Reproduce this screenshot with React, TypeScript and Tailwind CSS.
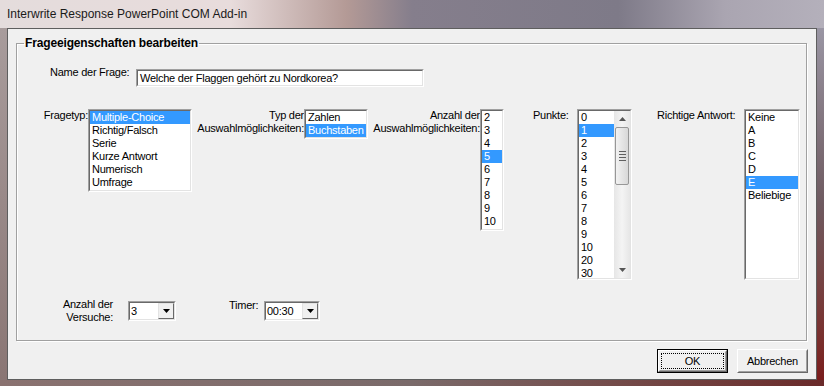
import type { ReactNode } from "react";

const font = { fontFamily: '"Liberation Sans", Arial, sans-serif' };

// sunken 3D frame (classic listbox / edit)
function Sunken({ className = "", children }: { className?: string; children: ReactNode }) {
  return (
    <div className={`border border-t-[#a0a0a0] border-l-[#a0a0a0] border-r-white border-b-white ${className}`}>
      <div className="h-full w-full border border-t-[#696969] border-l-[#696969] border-r-[#e3e3e3] border-b-[#e3e3e3] bg-white">
        {children}
      </div>
    </div>
  );
}

function ListBox({
  items,
  selected,
  className,
  scroll = false,
}: {
  items: string[];
  selected: string;
  className: string;
  scroll?: boolean;
}) {
  return (
    <Sunken className={className}>
      <div className="flex h-full">
        <div className="flex-1 min-w-0">
          {items.map((it) => (
            <div
              key={it}
              className={`h-[13px] pl-[2px] leading-[13px] whitespace-nowrap ${
                it === selected ? "bg-[#3399ff] text-white" : "text-black"
              }`}
            >
              {it}
            </div>
          ))}
        </div>
        {scroll && <ScrollBar />}
      </div>
    </Sunken>
  );
}

function ScrollBar() {
  return (
    <div className="w-[16px] h-full flex flex-col items-center bg-gradient-to-r from-[#e6e6e6] via-[#f4f4f4] to-[#e6e6e6]">
      <div className="h-[16px] w-full flex items-center justify-center">
        <svg width="7" height="4" viewBox="0 0 7 4">
          <path d="M3.5 0 L7 4 L0 4 Z" fill="#555" />
        </svg>
      </div>
      <div className="w-[14px] h-[58px] rounded-[2px] border border-[#979797] bg-gradient-to-r from-[#f2f2f2] to-[#d8d8d8] flex flex-col items-center justify-center gap-[2px]">
        <div className="w-[7px] h-px bg-[#606060]" />
        <div className="w-[7px] h-px bg-[#606060]" />
        <div className="w-[7px] h-px bg-[#606060]" />
        <div className="w-[7px] h-px bg-[#606060]" />
      </div>
      <div className="flex-1" />
      <div className="h-[16px] w-full flex items-center justify-center">
        <svg width="7" height="4" viewBox="0 0 7 4">
          <path d="M0 0 L7 0 L3.5 4 Z" fill="#555" />
        </svg>
      </div>
    </div>
  );
}

function Combo({ value, className }: { value: string; className: string }) {
  return (
    <Sunken className={className}>
      <div className="flex h-full items-center">
        <div className="flex-1 pl-[1px] leading-[13px]">{value}</div>
        <div className="h-[16px] w-[16px] border border-t-[#e3e3e3] border-l-[#e3e3e3] border-r-[#696969] border-b-[#696969] bg-[#f0f0f0] flex items-center justify-center">
          <svg width="7" height="4" viewBox="0 0 7 4">
            <path d="M0 0 L7 0 L3.5 4 Z" fill="#000" />
          </svg>
        </div>
      </div>
    </Sunken>
  );
}

function Button({ label, isDefault = false }: { label: string; isDefault?: boolean }) {
  const inner = (
    <div className="h-full w-full border border-t-white border-l-white border-r-[#696969] border-b-[#696969] bg-[#f0f0f0]">
      <div className="h-full w-full border border-t-[#f0f0f0] border-l-[#f0f0f0] border-r-[#a0a0a0] border-b-[#a0a0a0] flex items-center justify-center p-[1px]">
        <div
          className={`h-full w-full flex items-center justify-center leading-none ${
            isDefault ? "border border-dotted border-black" : ""
          }`}
        >
          {label}
        </div>
      </div>
    </div>
  );
  return (
    <div className={`w-[71px] h-[24px] ${isDefault ? "border border-black" : ""}`}>{inner}</div>
  );
}

export default function App() {
  return (
    <div className="w-[824px] h-[386px] overflow-hidden text-[11px] tracking-[-0.25px] text-black" style={font}>
      {/* title bar */}
      <div className="h-[28px] flex items-center pl-[7px] bg-[linear-gradient(90deg,#e4dcdc_0%,#e8dcdc_28%,#b49a96_42%,#857e8c_50%,#7e7a88_75%,#aaa5b1_88%,#b4b0bb_100%)]">
        <span className="text-[12px] tracking-normal text-[#1a1a1a]">Interwrite Response PowerPoint COM Add-in</span>
      </div>
      <div className="flex h-[352px]">
        <div className="w-[7px] bg-gradient-to-b from-[#a89c9c] to-[#8a7674]" />
        <div className="w-[810px] border border-[#5e5e5e] bg-[#f0f0f0] flex flex-col">
          <fieldset className="ml-[8px] mr-[9px] mt-[7px] h-[305px] border border-[#a0a0a0] shadow-[1px_1px_0_#fff,inset_1px_1px_0_#fff] px-0 flex flex-col">
            <legend className="ml-[7px] px-[1px] text-[12px] leading-[14px] font-bold tracking-[-0.15px]">
              Frageeigenschaften bearbeiten
            </legend>

            {/* name */}
            <div className="flex items-start mt-[16px] pl-[33px]">
              <div className="w-[86px] leading-[13px]">Name der Frage:</div>
              <Sunken className="mt-[3px] w-[288px] h-[18px]">
                <div className="pl-[2px] leading-[14px] text-[11px]">Welche der Flaggen gehört zu Nordkorea?</div>
              </Sunken>
            </div>

            {/* list boxes */}
            <div className="flex items-start mt-[22px] leading-[13px]">
              <div className="w-[71px] text-right">Fragetyp:</div>
              <ListBox
                className="w-[104px] h-[83px]"
                items={["Multiple-Choice", "Richtig/Falsch", "Serie", "Kurze Antwort", "Numerisch", "Umfrage"]}
                selected="Multiple-Choice"
              />
              <div className="w-[112px] text-right">
                Typ der
                <br />
                Auswahlmöglichkeiten:
              </div>
              <ListBox className="w-[64px] h-[30px]" items={["Zahlen", "Buchstaben"]} selected="Buchstaben" />
              <div className="w-[112px] text-right">
                Anzahl der
                <br />
                Auswahlmöglichkeiten:
              </div>
              <ListBox
                className="w-[24px] h-[122px]"
                items={["2", "3", "4", "5", "6", "7", "8", "9", "10"]}
                selected="5"
              />
              <div className="ml-[29px] w-[44px]">Punkte:</div>
              <ListBox
                className="w-[55px] h-[171px]"
                items={["0", "1", "2", "3", "4", "5", "6", "7", "8", "9", "10", "20", "30"]}
                selected="1"
                scroll
              />
              <div className="ml-[25px] w-[87px]">Richtige Antwort:</div>
              <ListBox
                className="w-[56px] h-[171px]"
                items={["Keine", "A", "B", "C", "D", "E", "Beliebige"]}
                selected="E"
              />
            </div>

            {/* attempts / timer */}
            <div className="flex items-start mt-[18px] leading-[13px]">
              <div className="w-[96px] text-right">
                Anzahl der
                <br />
                Versuche:
              </div>
              <Combo value="3" className="ml-[15px] mt-[3px] w-[48px] h-[20px]" />
              <div className="ml-[53px] mt-[1px] w-[35px]">Timer:</div>
              <Combo value="00:30" className="mt-[3px] w-[56px] h-[20px]" />
            </div>
          </fieldset>

          <div className="flex justify-end gap-[9px] mt-[8px] pr-[8px]">
            <Button label="OK" isDefault />
            <Button label="Abbrechen" />
          </div>
        </div>
        <div className="w-[7px] bg-gradient-to-b from-[#9a96a4] via-[#6e5a60] to-[#7a1c1c]" />
      </div>
      <div className="h-[6px] bg-gradient-to-r from-[#8a7270] via-[#7a6a6a] to-[#6a2a2a]" />
    </div>
  );
}
